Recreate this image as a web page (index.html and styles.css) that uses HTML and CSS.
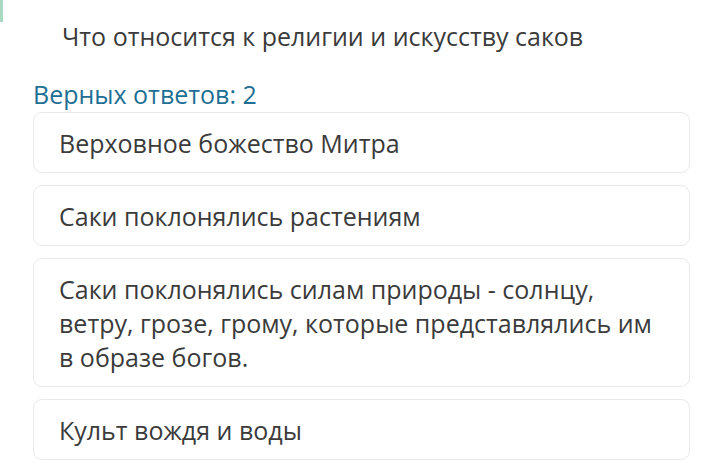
FILE: index.html
```html
<!DOCTYPE html>
<html lang="ru">
<head>
<meta charset="utf-8">
<link rel="stylesheet" href="styles.css">
</head>
<body>
<div class="page">
  <div class="marker"></div>
  <h1 class="question">Что относится к религии и искусству саков</h1>
  <div class="hint">Верных ответов: 2</div>
  <ul class="answers">
    <li class="answer">Верховное божество Митра</li>
    <li class="answer">Саки поклонялись растениям</li>
    <li class="answer">Саки поклонялись силам природы - солнцу, ветру, грозе, грому, которые представлялись им в образе богов.</li>
    <li class="answer">Культ вождя и воды</li>
  </ul>
</div>
</body>
</html>
```
FILE: styles.css
```css
html, body {
  margin: 0;
  padding: 0;
  background: #ffffff;
}
body {
  font-family: "Open Sans", "Noto Sans", sans-serif;
  color: #3b3b3b;
  width: 720px;
  height: 471px;
  overflow: hidden;
}
.page {
  position: relative;
  padding: 20px 30px 0 33px;
}
.marker {
  position: absolute;
  left: 0;
  top: 0;
  width: 3px;
  height: 22px;
  background: #a8d8bf;
}
.question {
  margin: 0 0 0 29px;
  font-size: 25px;
  font-weight: 400;
  line-height: 33px;
  color: #3b3b3b;
}
.hint {
  margin: 25px 0 1px;
  font-size: 25px;
  line-height: 33px;
  color: #1d6f94;
}
.answers {
  list-style: none;
  margin: 0;
  padding: 0;
  display: flex;
  flex-direction: column;
  gap: 12px;
}
.answer {
  border: 1px solid #e6ebe8;
  border-radius: 9px;
  padding: 13px 30px 12px 25px;
  font-size: 25px;
  line-height: 34px;
  color: #3b3b3b;
  background: #fff;
}
```
